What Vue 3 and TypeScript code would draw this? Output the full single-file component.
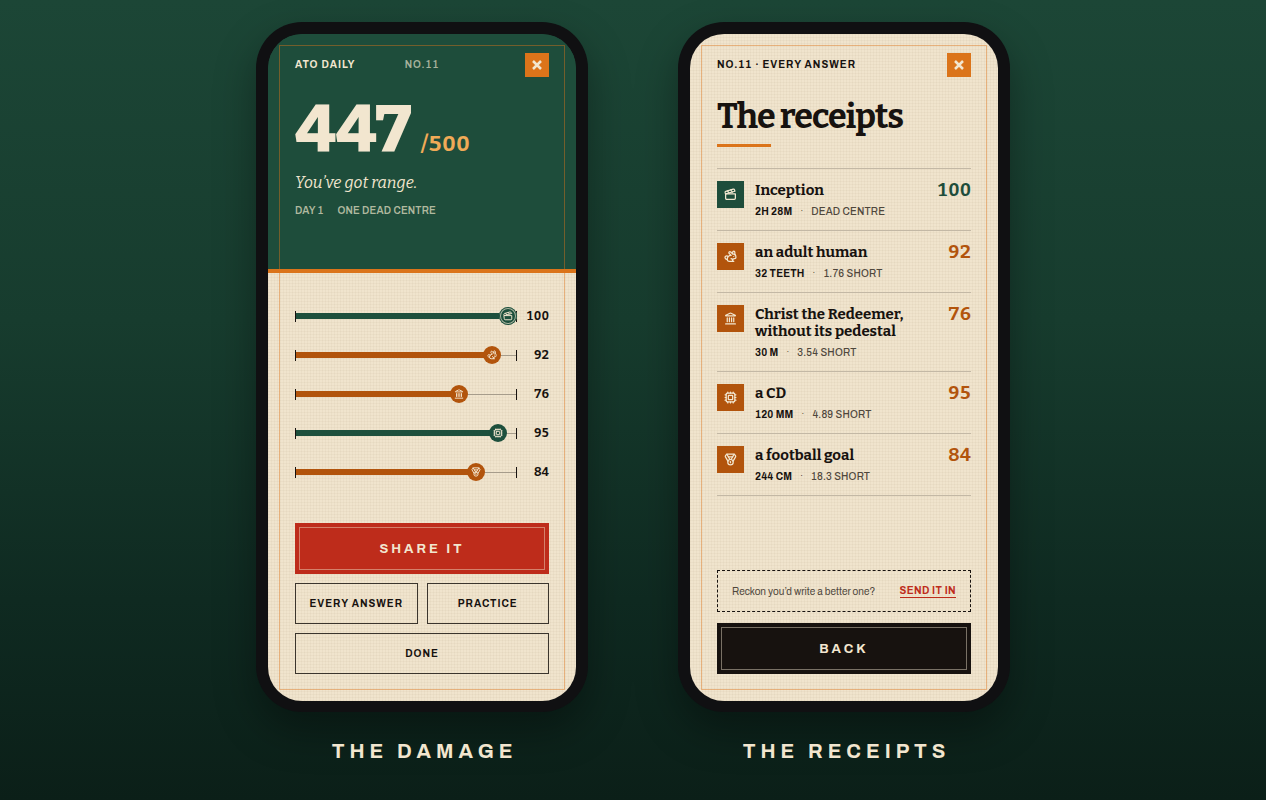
<script setup lang="ts">
type IconName = 'film' | 'rabbit' | 'landmark' | 'chip' | 'medal'

interface Answer {
  icon: IconName
  title: string
  actual: string
  result: string
  score: number
}

const icons: Record<IconName, string[]> = {
  film: [
    'M20.2 6 3 11l-.9-2.4c-.3-1.1.3-2.2 1.3-2.5l13.5-4c1.1-.3 2.2.3 2.5 1.3Z',
    'm6.2 5.3 3.1 3.9',
    'm12.4 3.4 3.1 4',
    'M3 11h18v8a2 2 0 0 1-2 2H5a2 2 0 0 1-2-2Z',
  ],
  rabbit: [
    'M13 16a3 3 0 0 1 2.24 5',
    'M18 12h.01',
    'M18 21h-8a4 4 0 0 1-4-4 7 7 0 0 1 7-7h.2L9.6 6.4a1 1 0 1 1 2.8-2.8L15.8 7h.2c3.3 0 6 2.7 6 6v1a2 2 0 0 1-2 2h-1a3 3 0 0 0-3 3',
    'M20 8.54V4a2 2 0 1 0-4 0v3',
    'M7.612 12.524a3 3 0 1 0-1.6 4.3',
  ],
  landmark: [
    'M10 18v-7',
    'M11.12 2.198a2 2 0 0 1 1.76.006l7.866 3.847c.476.233.31.949-.22.949H3.474c-.53 0-.695-.716-.22-.949z',
    'M14 18v-7',
    'M18 18v-7',
    'M3 22h18',
    'M6 18v-7',
  ],
  chip: [
    'M6 4h12a2 2 0 0 1 2 2v12a2 2 0 0 1-2 2H6a2 2 0 0 1-2-2V6a2 2 0 0 1 2-2Z',
    'M9 8h6a1 1 0 0 1 1 1v6a1 1 0 0 1-1 1H9a1 1 0 0 1-1-1V9a1 1 0 0 1 1-1Z',
    'M12 20v2M12 2v2M17 20v2M17 2v2M7 20v2M7 2v2M2 12h2M2 17h2M2 7h2M20 12h2M20 17h2M20 7h2',
  ],
  medal: [
    'M7.21 15 2.66 7.14a2 2 0 0 1 .13-2.2L4.4 2.8A2 2 0 0 1 6 2h12a2 2 0 0 1 1.6.8l1.6 2.14a2 2 0 0 1 .14 2.2L16.79 15',
    'M11 12 5.12 2.2',
    'm13 12 5.88-9.8',
    'M8 7h8',
    'M12 12a5 5 0 1 0 0 10 5 5 0 0 0 0-10Z',
    'M12 18v-2h-.5',
  ],
}

const answers: Answer[] = [
  { icon: 'film', title: 'Inception', actual: '2H 28M', result: 'DEAD CENTRE', score: 100 },
  { icon: 'rabbit', title: 'an adult human', actual: '32 TEETH', result: '1.76 SHORT', score: 92 },
  { icon: 'landmark', title: 'Christ the Redeemer, without its pedestal', actual: '30 M', result: '3.54 SHORT', score: 76 },
  { icon: 'chip', title: 'a CD', actual: '120 MM', result: '4.89 SHORT', score: 95 },
  { icon: 'medal', title: 'a football goal', actual: '244 CM', result: '18.3 SHORT', score: 84 },
]

const reach = (score: number) => ({ width: `calc(9px + (100% - 17px) * ${score / 100})` })
</script>

<template>
  <main class="stage">
    <figure class="exhibit">
      <section class="phone">
        <div class="screen">
          <header class="hero">
            <div class="topbar split">
              <strong>ATO DAILY</strong>
              <span class="muted">NO.11</span>
              <button class="close" type="button" aria-label="Close">
                <svg viewBox="0 0 12 12"><path d="M2 2l8 8M10 2l-8 8" /></svg>
              </button>
            </div>
            <p class="total"><span class="points">447</span><span class="max">/500</span></p>
            <p class="verdict">You’ve got range.</p>
            <p class="stats"><span>DAY 1</span><span>ONE DEAD CENTRE</span></p>
          </header>
          <div class="body">
            <ul class="bars">
              <li v-for="a in answers" :key="a.title" class="bar">
                <div class="track">
                  <div class="fill" :class="{ good: a.score >= 95 }" :style="reach(a.score)">
                    <span class="knob" :class="{ perfect: a.score === 100 }">
                      <svg class="icon" viewBox="0 0 24 24"><path v-for="d in icons[a.icon]" :key="d" :d="d" /></svg>
                    </span>
                  </div>
                </div>
                <span class="value">{{ a.score }}</span>
              </li>
            </ul>
            <div class="actions">
              <button class="primary red" type="button">SHARE IT</button>
              <div class="pair">
                <button class="secondary" type="button">EVERY ANSWER</button>
                <button class="secondary" type="button">PRACTICE</button>
              </div>
              <button class="secondary" type="button">DONE</button>
            </div>
          </div>
        </div>
      </section>
      <figcaption>THE DAMAGE</figcaption>
    </figure>

    <figure class="exhibit">
      <section class="phone">
        <div class="screen receipts">
          <div class="topbar">
            <strong>NO.11 · EVERY ANSWER</strong>
            <button class="close" type="button" aria-label="Close">
              <svg viewBox="0 0 12 12"><path d="M2 2l8 8M10 2l-8 8" /></svg>
            </button>
          </div>
          <h1>The receipts</h1>
          <ul class="list">
            <li v-for="a in answers" :key="a.title" class="entry">
              <span class="tile" :class="{ good: a.score === 100 }">
                <svg class="icon" viewBox="0 0 24 24"><path v-for="d in icons[a.icon]" :key="d" :d="d" /></svg>
              </span>
              <div class="detail">
                <h2>{{ a.title }}</h2>
                <p><b>{{ a.actual }}</b><i>·</i><span>{{ a.result }}</span></p>
              </div>
              <span class="score" :class="{ good: a.score === 100 }">{{ a.score }}</span>
            </li>
          </ul>
          <div class="bottom">
            <div class="pitch">
              <span>Reckon you’d write a better one?</span>
              <a href="#">SEND IT IN</a>
            </div>
            <button class="primary ink" type="button">BACK</button>
          </div>
        </div>
      </section>
      <figcaption>THE RECEIPTS</figcaption>
    </figure>
  </main>
</template>

<style>
body {
  margin: 0;
  background: #0b1e18;
}
</style>

<style scoped>
.stage {
  --ink: #17120f;
  --cream: #f2e6cf;
  --green: #1e4d3b;
  --rust: #b2540c;
  --orange: #db741a;
  --slab: 'Bitter', 'DejaVu Serif Condensed', 'DejaVu Serif', serif;
  box-sizing: border-box;
  min-height: 100vh;
  padding: 22px 24px;
  display: flex;
  justify-content: center;
  align-items: flex-start;
  gap: 90px;
  background: linear-gradient(180deg, #1c4636 0%, #173c2e 40%, #0f2a21 75%, #0b1f18 100%);
  font-family: 'Archivo', 'Liberation Sans', sans-serif;
  color: var(--ink);
}
.stage * { box-sizing: border-box; }
figure, p, h1, h2, ul { margin: 0; padding: 0; }
ul { list-style: none; }
button { font-family: inherit; cursor: pointer; padding: 0; border-radius: 0; }
.exhibit { width: 332px; }
figcaption {
  margin-top: 27px;
  padding-left: 5px;
  text-align: center;
  font-size: 20px;
  line-height: 24px;
  font-weight: 700;
  letter-spacing: 5px;
  color: var(--cream);
}
.phone {
  padding: 12px 12px 11px;
  border-radius: 46px;
  background: #101012;
  box-shadow: 0 18px 40px rgba(0, 0, 0, 0.35);
}
.screen {
  position: relative;
  min-height: 667px;
  display: flex;
  flex-direction: column;
  border-radius: 34px;
  overflow: hidden;
  background-color: #f0e4cd;
  background-image:
    repeating-linear-gradient(0deg, rgba(90, 60, 20, 0.035) 0 1px, transparent 1px 3px),
    repeating-linear-gradient(90deg, rgba(90, 60, 20, 0.035) 0 1px, transparent 1px 3px);
}
.screen::after {
  content: '';
  position: absolute;
  inset: 11px;
  border: 1px solid rgba(219, 116, 26, 0.45);
  pointer-events: none;
}
.topbar {
  display: flex;
  justify-content: space-between;
  align-items: center;
  height: 24px;
  font-size: 10px;
  line-height: 12px;
  letter-spacing: 1px;
  font-variant-numeric: tabular-nums;
}
.split {
  display: grid;
  grid-template-columns: 1fr auto 1fr;
}
.split .close { justify-self: end; }
.close {
  width: 24px;
  height: 24px;
  border: 0;
  display: grid;
  place-items: center;
  background: var(--orange);
}
.close svg {
  width: 12px;
  height: 12px;
  fill: none;
  stroke: var(--cream);
  stroke-width: 2.5;
}
.hero {
  min-height: 239px;
  padding: 19px 27px 0;
  border-radius: 34px 34px 0 0;
  background: var(--green);
  border-bottom: 4px solid var(--orange);
  color: var(--cream);
}
.screen:has(.hero) {
  background-image:
    linear-gradient(var(--green), var(--green)),
    repeating-linear-gradient(0deg, rgba(90, 60, 20, 0.035) 0 1px, transparent 1px 3px),
    repeating-linear-gradient(90deg, rgba(90, 60, 20, 0.035) 0 1px, transparent 1px 3px);
  background-size: 100% 60px, auto, auto;
  background-repeat: no-repeat, repeat, repeat;
}
.muted { color: #a8b39d; font-weight: 600; }
.total {
  margin-top: 19px;
  display: flex;
  align-items: baseline;
  gap: 10px;
}
.points { font: 800 66px/66px var(--slab); letter-spacing: -1px; }
.max {
  font: 700 22px/32px var(--slab);
  font-variant-numeric: tabular-nums;
  color: #f0aa57;
}
.verdict { margin-top: 10px; font: italic 400 16px/22px var(--slab); }
.stats {
  margin-top: 11px;
  display: flex;
  gap: 14px;
  font-size: 10px;
  line-height: 12px;
  font-weight: 600;
  letter-spacing: 0.02em;
  color: #b0b99f;
}
.body {
  flex: 1;
  display: flex;
  flex-direction: column;
  justify-content: space-between;
  padding: 34px 27px 27px;
}
.bars { display: grid; gap: 21px; }
.bar { display: flex; align-items: center; gap: 4px; height: 18px; }
.track {
  flex: 1;
  height: 11px;
  display: flex;
  align-items: center;
  border: solid var(--ink);
  border-width: 0 1px;
  background: linear-gradient(#a69c8b, #a69c8b) center / 100% 1px no-repeat;
}
.fill {
  height: 6px;
  display: flex;
  justify-content: flex-end;
  align-items: center;
  background: var(--rust);
}
.knob {
  flex: none;
  width: 18px;
  height: 18px;
  margin-right: -9px;
  border-radius: 50%;
  display: grid;
  place-items: center;
  background-color: var(--rust);
}
.fill.good, .good .knob { background-color: #1d4f3c; }
.knob.perfect { box-shadow: inset 0 0 0 1px #1d4f3c, inset 0 0 0 2px #a9b49f; }
.icon {
  width: 10px;
  height: 10px;
  fill: none;
  stroke: var(--cream);
  stroke-width: 2.3;
  stroke-linecap: round;
  stroke-linejoin: round;
}
.value {
  width: 28px;
  text-align: right;
  font: 700 12px/18px var(--slab);
  font-variant-numeric: tabular-nums;
}
.actions { display: grid; gap: 9px; }
.pair { display: grid; grid-template-columns: 1fr 1fr; gap: 9px; }
.primary {
  width: 100%;
  height: 51px;
  border: 0;
  outline: 1px solid rgba(242, 230, 207, 0.45);
  outline-offset: -5px;
  color: var(--cream);
  font-size: 13px;
  font-weight: 700;
  letter-spacing: 3px;
}
.red { background: #be2c1b; }
.ink { background: var(--ink); }
.secondary {
  height: 41px;
  border: 1px solid #3b352d;
  background: transparent;
  color: var(--ink);
  font-size: 10px;
  font-weight: 700;
  letter-spacing: 1px;
}
.receipts { padding: 19px 27px 27px; }
h1 {
  margin-top: 18px;
  font: 700 34px/44px var(--slab);
  letter-spacing: -1px;
  white-space: nowrap;
}
h1::after {
  content: '';
  display: block;
  width: 54px;
  height: 3px;
  margin-top: 5px;
  background: var(--orange);
}
.list { margin-top: 21px; border-bottom: 1px solid #c3b8a5; }
.entry {
  display: flex;
  align-items: flex-start;
  border-top: 1px solid #c3b8a5;
  padding: 12px 0;
}
.tile {
  width: 27px;
  height: 27px;
  margin-right: 11px;
  display: grid;
  place-items: center;
  background: var(--rust);
}
.tile.good { background: var(--green); }
.tile .icon { width: 13px; height: 13px; }
.detail { flex: 1; padding-top: 1px; }
h2 { max-width: 170px; font: 700 15px/17px var(--slab); }
.detail p {
  margin-top: 7px;
  display: flex;
  gap: 8px;
  font-size: 10px;
  line-height: 12px;
  letter-spacing: 0.02em;
  font-variant-numeric: tabular-nums;
}
.detail i { font-style: normal; font-size: 8px; line-height: 10px; }
.detail p span { color: #4f473c; font-weight: 500; }
.score {
  padding-top: 1px;
  font: 700 18px/17px var(--slab);
  font-variant-numeric: tabular-nums;
  color: var(--rust);
}
.score.good { color: var(--green); }
.bottom { margin-top: auto; display: grid; gap: 11px; }
.pitch {
  height: 42px;
  padding: 0 14px;
  display: flex;
  align-items: center;
  justify-content: space-between;
  border: 1px dashed var(--ink);
  font-size: 10px;
  color: #4f473c;
  white-space: nowrap;
}
.pitch a {
  border-bottom: 1px solid #be2c1b;
  color: #be2c1b;
  font-size: 10px;
  line-height: 13px;
  font-weight: 700;
  letter-spacing: 0.04em;
  text-decoration: none;
}
</style>
